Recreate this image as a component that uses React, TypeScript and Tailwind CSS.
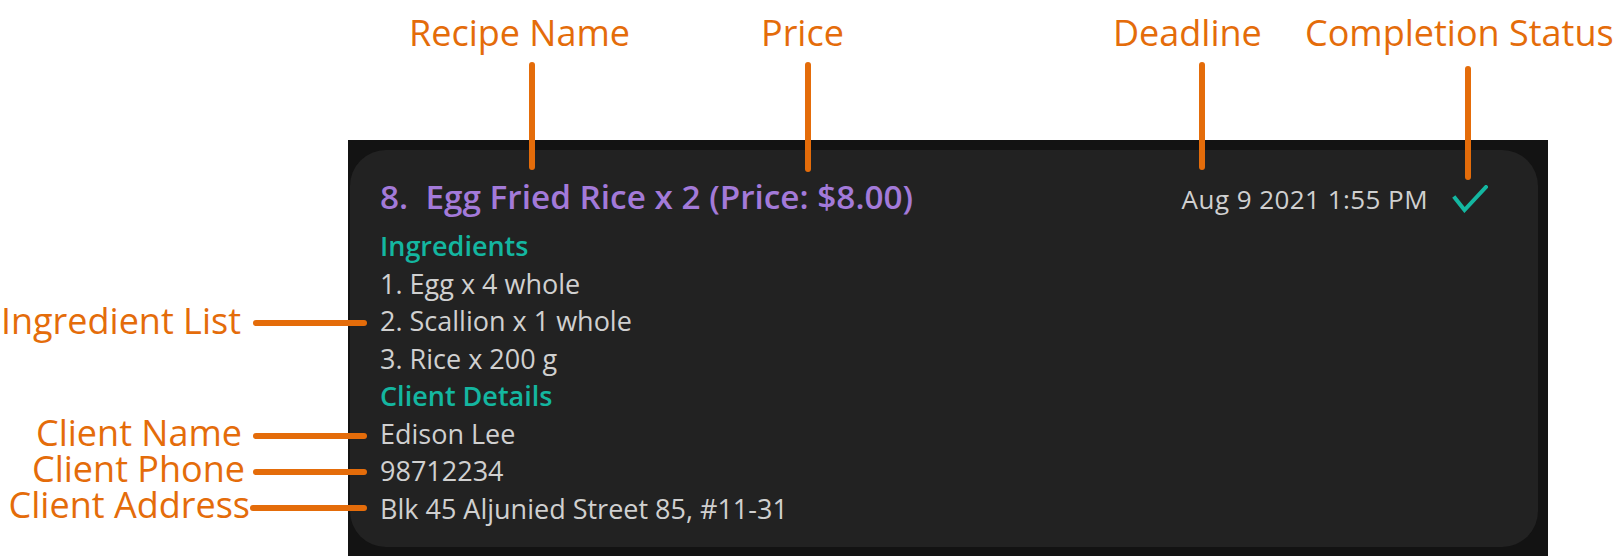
import React from 'react'

const font = { fontFamily: '"Open Sans", "Noto Sans", sans-serif' }

const ingredients = ['1. Egg x 4 whole', '2. Scallion x 1 whole', '3. Rice x 200 g']
const client = ['Edison Lee', '98712234', 'Blk 45 Aljunied Street 85, #11-31']

const CheckMark = () => (
  <svg width="36" height="28" viewBox="0 0 36 28" fill="none">
    <path d="M3 13 L12.5 25 L34 2" stroke="#14b7a1" strokeWidth="4" strokeLinecap="square" strokeLinejoin="miter" />
  </svg>
)

const OrderCard = () => {
  return (
    <div className="ml-[348px] mt-[140px] h-[416px] w-[1200px] bg-[#131313] pl-[2px] pt-[10px]">
      <div className="h-[397px] w-[1188px] rounded-[36px] bg-[#222222] pl-[30px] pr-[50px] pt-[24px]">
        <div className="flex items-center justify-between">
          <div className="text-[33.3px] font-semibold leading-[44px] text-[#a37ad9]">8.&nbsp; Egg Fried Rice x 2 (Price: $8.00)</div>
          <div className="flex items-center gap-[24px] pt-[6px]">
            <span className="text-[26px] leading-[37px] tracking-[0.45px] text-[#d0d0d0]">Aug 9 2021 1:55 PM</span>
            <CheckMark />
          </div>
        </div>
        <div className="mt-[9px] flex flex-col text-[27px] leading-[37.5px] text-[#d0d0d0]">
          <span className="font-semibold text-[#14b6a0]">Ingredients</span>
          {ingredients.map((item) => (
            <span key={item}>{item}</span>
          ))}
          <span className="font-semibold text-[#14b6a0]">Client Details</span>
          {client.map((item) => (
            <span key={item}>{item}</span>
          ))}
        </div>
      </div>
    </div>
  )
}

const topLabels = [
  { text: 'Recipe Name', left: 'left-[409px]', line: 'left-[529px] top-[62px] h-[108px]' },
  { text: 'Price', left: 'left-[761px]', line: 'left-[805px] top-[62px] h-[110px]' },
  { text: 'Deadline', left: 'left-[1113px]', line: 'left-[1199px] top-[62px] h-[108px]' },
  { text: 'Completion Status', left: 'left-[1305px]', line: 'left-[1465px] top-[66px] h-[114px]' },
]

const sideLabels = [
  { text: 'Ingredient List', box: 'top-[306px] w-[241px]', line: 'top-[320px] left-[253px] w-[114px]' },
  { text: 'Client Name', box: 'top-[418px] w-[242px]', line: 'top-[433px] left-[253px] w-[114px]' },
  { text: 'Client Phone', box: 'top-[454px] w-[245px]', line: 'top-[469px] left-[253px] w-[114px]' },
  { text: 'Client Address', box: 'top-[490px] w-[250px]', line: 'top-[505px] left-[250px] w-[117px]' },
]

export default function App() {
  return (
    <div className="relative h-[556px] w-[1616px] overflow-hidden bg-white" style={font}>
      <OrderCard />

      {topLabels.map((l) => (
        <React.Fragment key={l.text}>
          <span className={`absolute top-[15px] ${l.left} text-[36px] leading-[36px] whitespace-nowrap text-[#e46c0a]`}>{l.text}</span>
          <div className={`absolute w-[6px] rounded-full bg-[#e46c0a] ${l.line}`} />
        </React.Fragment>
      ))}

      {sideLabels.map((l) => (
        <React.Fragment key={l.text}>
          <span className={`absolute left-0 text-right ${l.box} text-[36px] leading-[30px] whitespace-nowrap text-[#e46c0a]`}>{l.text}</span>
          <div className={`absolute h-[6px] rounded-full bg-[#e46c0a] ${l.line}`} />
        </React.Fragment>
      ))}
    </div>
  )
}
